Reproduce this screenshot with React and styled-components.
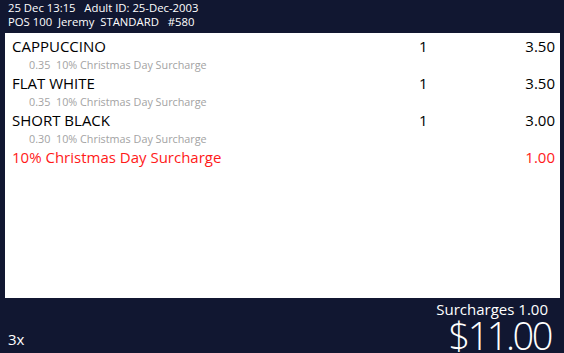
import React from 'react';
import styled, { createGlobalStyle } from 'styled-components';

const colors = {
  navy: '#111731',
  white: '#ffffff',
  ink: '#000000',
  muted: '#a3a3a3',
  red: '#ff1a1a',
};

const GlobalStyle = createGlobalStyle`
  html, body {
    margin: 0;
    padding: 0;
    background: ${colors.navy};
  }
  body {
    font-family: "Open Sans", "Noto Sans", "Liberation Sans", sans-serif;
  }
`;

const Screen = styled.div`
  display: flex;
  flex-direction: column;
  width: 564px;
  height: 353px;
  background: ${colors.navy};
  overflow: hidden;
`;

const Header = styled.header`
  display: flex;
  flex-direction: column;
  height: 33px;
  padding: 1px 8px 0;
  box-sizing: border-box;
  color: ${colors.white};
  font-size: 11.3px;
  line-height: 14px;
  white-space: pre;
`;

const Panel = styled.main`
  flex: 1;
  margin: 0 4px 0 5px;
  padding: 3px 5px 0 7px;
  background: ${colors.white};
`;

const Line = styled.div`
  display: grid;
  grid-template-columns: 1fr 40px 96px;
  height: 20px;
  align-items: center;
  font-size: 15px;
  color: ${({ $tone }) => ($tone === 'red' ? colors.red : colors.ink)};
`;

const Price = styled.span`
  text-align: right;
`;

const Modifier = styled.div`
  height: 17px;
  line-height: 17px;
  padding-left: 17px;
  font-size: 10.8px;
  color: ${colors.muted};
  white-space: pre;
`;

const Footer = styled.footer`
  display: flex;
  justify-content: space-between;
  align-items: flex-end;
  height: 55px;
  padding: 0 13px 0 8px;
  box-sizing: border-box;
  color: ${colors.white};
`;

const Count = styled.span`
  font-size: 15px;
  line-height: 18px;
  margin-bottom: 5px;
`;

const Totals = styled.div`
  display: flex;
  flex-direction: column;
  align-items: flex-end;
  margin-bottom: 1px;
`;

const Surcharges = styled.span`
  font-size: 15px;
  line-height: 16px;
  margin-right: 3px;
  margin-bottom: 1px;
`;

const Total = styled.span`
  font-size: 38px;
  font-weight: 300;
  letter-spacing: -2.5px;
  line-height: 34px;
`;

const items = [
  { name: 'CAPPUCCINO', qty: 1, price: '3.50', surcharge: '0.35' },
  { name: 'FLAT WHITE', qty: 1, price: '3.50', surcharge: '0.35' },
  { name: 'SHORT BLACK', qty: 1, price: '3.00', surcharge: '0.30' },
];

export default function App() {
  return (
    <>
      <GlobalStyle />
      <Screen>
        <Header>
          <span>25 Dec 13:15   Adult ID: 25-Dec-2003</span>
          <span>POS 100  Jeremy  STANDARD   #580</span>
        </Header>
        <Panel>
          {items.map((item) => (
            <React.Fragment key={item.name}>
              <Line>
                <span>{item.name}</span>
                <span>{item.qty}</span>
                <Price>{item.price}</Price>
              </Line>
              <Modifier>{item.surcharge}  10% Christmas Day Surcharge</Modifier>
            </React.Fragment>
          ))}
          <Line $tone="red">
            <span>10% Christmas Day Surcharge</span>
            <span />
            <Price>1.00</Price>
          </Line>
        </Panel>
        <Footer>
          <Count>3x</Count>
          <Totals>
            <Surcharges>Surcharges 1.00</Surcharges>
            <Total>$11.00</Total>
          </Totals>
        </Footer>
      </Screen>
    </>
  );
}
